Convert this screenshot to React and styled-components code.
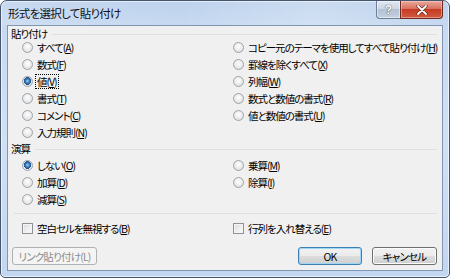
import styled, { createGlobalStyle } from 'styled-components'

const GlobalStyle = createGlobalStyle`
    html, body {
        margin: 0;
        padding: 0;
        background: #ffffff;
    }
    body {
        font-family: "Noto Sans CJK JP", "Noto Sans", sans-serif;
        font-size: 10.5px;
        font-feature-settings: "palt";
        letter-spacing: -1px;
        color: #000000;
    }
`

const pasteLeft = [
    { label: 'すべて', key: 'A' },
    { label: '数式', key: 'F' },
    { label: '値', key: 'V', checked: true, focused: true },
    { label: '書式', key: 'T' },
    { label: 'コメント', key: 'C' },
    { label: '入力規則', key: 'N' },
]

const pasteRight = [
    { label: 'コピー元のテーマを使用してすべて貼り付け', key: 'H' },
    { label: '罫線を除くすべて', key: 'X' },
    { label: '列幅', key: 'W' },
    { label: '数式と数値の書式', key: 'R' },
    { label: '値と数値の書式', key: 'U' },
]

const opLeft = [
    { label: 'しない', key: 'O', checked: true },
    { label: '加算', key: 'D' },
    { label: '減算', key: 'S' },
]

const opRight = [
    { label: '乗算', key: 'M' },
    { label: '除算', key: 'I' },
]

const Label = ({ item }) => (
    <Text $focused={item.focused}>
        {item.label}(<u>{item.key}</u>)
    </Text>
)

const RadioList = ({ items }) => (
    <Column>
        {items.map((item) => (
            <Row key={item.key}>
                <Radio $checked={item.checked} />
                <Label item={item} />
            </Row>
        ))}
    </Column>
)

const App = () => {
    return (
        <>
            <GlobalStyle />
            <Window>
                <TitleBar>
                    <Title>形式を選択して貼り付け</Title>
                    <Caption>
                        <HelpButton>?</HelpButton>
                        <CloseButton>
                            <svg width="12" height="10" viewBox="0 0 12 10">
                                <path d="M2 1 L10 9 M10 1 L2 9" stroke="#6b2a20" strokeWidth="3.2" strokeLinecap="round" />
                                <path d="M2 1 L10 9 M10 1 L2 9" stroke="#ffffff" strokeWidth="1.8" strokeLinecap="round" />
                            </svg>
                        </CloseButton>
                    </Caption>
                </TitleBar>
                <Client>
                    <GroupHeader>
                        <span>貼り付け</span>
                    </GroupHeader>
                    <Columns $top={-1}>
                        <RadioList items={pasteLeft} />
                        <RadioList items={pasteRight} />
                    </Columns>
                    <GroupHeader $top={2}>
                        <span>演算</span>
                    </GroupHeader>
                    <Columns $top={2}>
                        <RadioList items={opLeft} />
                        <RadioList items={opRight} />
                    </Columns>
                    <Separator />
                    <Columns $top={6}>
                        <Row>
                            <Checkbox />
                            <Text>空白セルを無視する(<u>B</u>)</Text>
                        </Row>
                        <Row>
                            <Checkbox />
                            <Text>行列を入れ替える(<u>E</u>)</Text>
                        </Row>
                    </Columns>
                    <ButtonRow>
                        <Button disabled $width={85}>リンク貼り付け(L)</Button>
                        <Spacer />
                        <Button $default $width={64}>OK</Button>
                        <Button $width={65}>キャンセル</Button>
                    </ButtonRow>
                </Client>
            </Window>
        </>
    )
}

export default App

const Window = styled.div`
    width: 450px;
    height: 278px;
    box-sizing: border-box;
    display: flex;
    flex-direction: column;
    border: 1px solid #44566e;
    border-radius: 7px 7px 5px 5px;
    background: linear-gradient(180deg, #bdd2ed 0%, #c8daf1 10%, #d1e1f4 50%, #c2d6ef 100%);
    box-shadow: inset 0 0 0 1px rgba(255, 255, 255, 0.6);
    overflow: hidden;
`

const TitleBar = styled.div`
    height: 24px;
    display: flex;
    align-items: flex-start;
    padding-left: 7px;
    background: linear-gradient(90deg, rgba(255, 255, 255, 0.15), rgba(255, 255, 255, 0) 40%, rgba(255, 255, 255, 0.2) 70%, rgba(255, 255, 255, 0));
`

const Title = styled.div`
    margin-top: 5px;
    font-size: 11.5px;
    line-height: 14px;
    letter-spacing: -0.7px;
    color: #111111;
`

const Caption = styled.div`
    margin-left: auto;
    margin-right: 6px;
    display: flex;
    height: 18px;
`

const HelpButton = styled.div`
    width: 23px;
    height: 17px;
    display: flex;
    align-items: center;
    justify-content: center;
    border: 1px solid #6d7e95;
    border-top: none;
    border-right: none;
    border-radius: 0 0 0 4px;
    background: linear-gradient(180deg, #dfe7f1 0%, #cdd8e6 45%, #b3c1d3 50%, #c3d1e2 100%);
    box-shadow: inset 0 0 0 1px rgba(255, 255, 255, 0.5);
    font-family: "Liberation Sans", sans-serif;
    font-size: 12px;
    font-weight: bold;
    letter-spacing: 0;
    color: #ffffff;
    text-shadow: 0 0 1px #3b4a5e, 0 0 1px #3b4a5e;
`

const CloseButton = styled.div`
    width: 41px;
    height: 17px;
    display: flex;
    align-items: center;
    justify-content: center;
    border: 1px solid #6a2a22;
    border-top: none;
    border-radius: 0 0 4px 0;
    background: linear-gradient(180deg, #e9a99b 0%, #d9725f 45%, #c73b26 50%, #d05a3e 100%);
    box-shadow: inset 0 0 0 1px rgba(255, 220, 210, 0.45);
`

const Client = styled.div`
    flex: 1;
    margin: 0 6px 6px 6px;
    display: flex;
    flex-direction: column;
    padding: 2px 5px 5px 3px;
    background: #f0f0f0;
    border: 1px solid #8196b2;
`

const GroupHeader = styled.div`
    height: 12px;
    margin-top: ${(p) => p.$top || 0}px;
    display: flex;
    align-items: center;
    gap: 5px;
    line-height: 12px;
    &::after {
        content: '';
        flex: 1;
        height: 1px;
        background: #dcdfe3;
    }
`

const Columns = styled.div`
    margin-top: ${(p) => p.$top || 0}px;
    padding-left: 11px;
    display: grid;
    grid-template-columns: 211px 1fr;
`

const Column = styled.div`
    display: flex;
    flex-direction: column;
`

const Row = styled.div`
    height: 17px;
    display: flex;
    align-items: center;
    gap: 3px;
    white-space: nowrap;
`

const Text = styled.span`
    line-height: 13px;
    padding: 0 1px;
    outline: ${(p) => (p.$focused ? '1px dotted #000000' : 'none')};
    u {
        text-underline-offset: 1px;
    }
`

const Radio = styled.span`
    width: 11px;
    height: 11px;
    box-sizing: border-box;
    border-radius: 50%;
    border: 1px solid #9ea4aa;
    flex: none;
    background: ${(p) =>
        p.$checked
            ? 'radial-gradient(circle at 50% 45%, #a9d7f5 0%, #3b7bbd 30%, #1f4f86 55%, #dfe3e7 58%, #f4f4f4 100%)'
            : 'radial-gradient(circle at 50% 40%, #ffffff 0%, #eeeeee 45%, #d3d6d9 100%)'};
`

const Checkbox = styled.span`
    width: 11px;
    height: 11px;
    box-sizing: border-box;
    flex: none;
    border: 1px solid #8f9399;
    background: linear-gradient(135deg, #d9dadc 0%, #eeeeef 55%, #fbfbfb 100%);
    box-shadow: inset 0 0 0 1px #f4f4f4;
`

const Separator = styled.div`
    margin: 5px 0 0 3px;
    height: 1px;
    background: #dcdfe3;
`

const ButtonRow = styled.div`
    margin-top: 10px;
    display: flex;
    align-items: center;
    gap: 10px;
    padding-left: 1px;
`

const Spacer = styled.div`
    flex: 1;
`

const Button = styled.button`
    width: ${(p) => p.$width}px;
    height: 18px;
    padding: 0;
    white-space: nowrap;
    font-family: inherit;
    font-size: 10.5px;
    letter-spacing: -0.8px;
    font-feature-settings: "palt";
    color: #000000;
    border-radius: 3px;
    border: 1px solid ${(p) => (p.$default ? '#3c7fb1' : '#707070')};
    background: linear-gradient(180deg, #f2f2f2 0%, #ebebeb 50%, #dddddd 51%, #cfcfcf 100%);
    box-shadow: ${(p) => (p.$default ? 'inset 0 0 0 1px #9fd6f3' : 'inset 0 0 0 1px #fcfcfc')};
    &:disabled {
        color: #8d8d8d;
        border-color: #adb2b5;
        background: #f4f4f4;
        box-shadow: none;
    }
`
